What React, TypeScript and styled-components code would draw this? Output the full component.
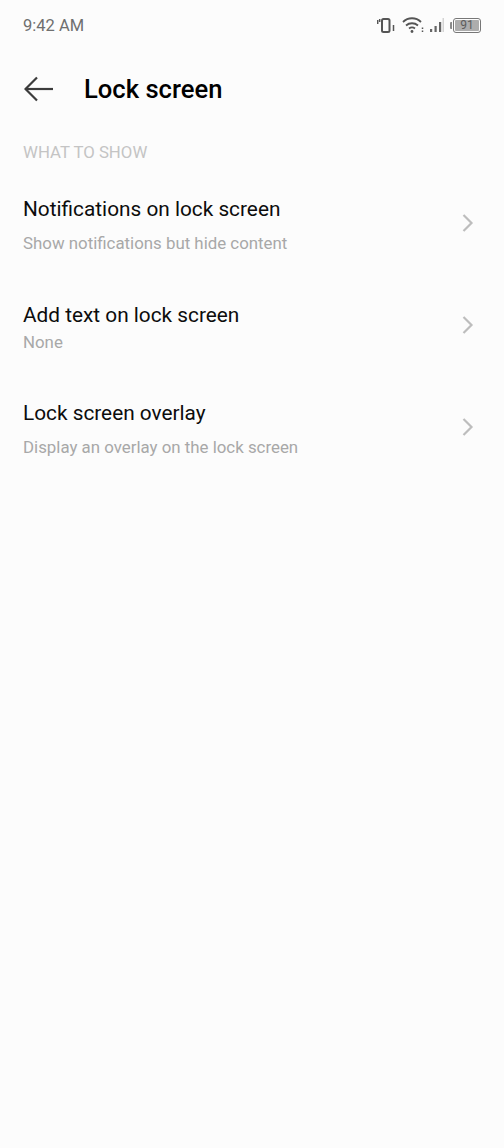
import React from 'react'
import styled, { createGlobalStyle } from 'styled-components'

const GlobalStyle = createGlobalStyle`
  html, body {
    margin: 0;
    padding: 0;
    background: #fcfcfc;
    font-family: Roboto, "Liberation Sans", sans-serif;
  }
`

const Screen = styled.div`
  width: 504px;
  height: 1148px;
  background: #fcfcfc;
  overflow: hidden;
`

const StatusBar = styled.div`
  display: flex;
  justify-content: space-between;
  align-items: center;
  height: 26px;
  padding: 12px 23px 0 23px;
  box-sizing: content-box;
`

const Time = styled.span`
  font-size: 16.5px;
  color: #6f6f6f;
`

const StatusIcons = styled.div`
  display: flex;
  align-items: center;
  gap: 6px;
`

const Battery = styled.div`
  display: flex;
  align-items: center;
`

const BatteryCap = styled.div`
  width: 2px;
  height: 7px;
  background: #8a8a8a;
  border-radius: 1px 0 0 1px;
  margin-right: 1px;
`

const BatteryBody = styled.div`
  width: 24px;
  height: 11px;
  border: 1px solid #777;
  border-radius: 3px;
  padding: 1px;
  display: flex;
`

const BatteryLevel = styled.div`
  flex: 1;
  background: #adadad;
  border-radius: 1px;
  font-size: 12px;
  line-height: 11px;
  color: #5c5c5c;
  text-align: center;
`

const Header = styled.header`
  display: flex;
  align-items: center;
  height: 50px;
  padding: 0 0 0 24px;
  margin-top: 26px;
`

const BackButton = styled.div`
  display: flex;
  width: 60px;
`

const Title = styled.h1`
  margin: 0;
  font-size: 25.6px;
  font-weight: 500;
  color: #000;
`

const SectionLabel = styled.div`
  margin-top: 28px;
  margin-bottom: 10px;
  padding-left: 23px;
  font-size: 16.8px;
  line-height: 20px;
  color: #c4c4c4;
`

const Row = styled.div`
  display: flex;
  align-items: center;
  justify-content: space-between;
  height: 102px;
  padding: 0 30px 0 23px;
`

const RowText = styled.div`
  display: flex;
  flex-direction: column;
  padding-top: 4px;
`

const RowTitle = styled.span`
  font-size: 20.8px;
  line-height: 26px;
  color: #0c0c0c;
`

const RowSub = styled.span<{ $gap: number }>`
  margin-top: ${p => p.$gap}px;
  font-size: 16.85px;
  line-height: 22px;
  color: #a8a8a8;
`

const Back = () => (
  <svg width="30" height="26" viewBox="0 0 30 26" fill="none" stroke="#3c3c3c" strokeWidth="2.2">
    <path d="M1.5 13H29" />
    <path d="M13 1.5 1.5 13 13 24.5" />
  </svg>
)

const Chevron = () => (
  <svg width="12" height="20" viewBox="0 0 12 20" fill="none" stroke="#bdbdbd" strokeWidth="2.2">
    <path d="M1.500 2l8 8-8 8" />
  </svg>
)

const Vibrate = () => (
  <svg width="19" height="18" viewBox="0 0 19 18" fill="none" stroke="#555">
    <rect x="5" y="3" width="7.500" height="13" rx="1.500" strokeWidth="2" />
    <path d="M.7 4v4M2.700 3v3M16.500 9v6" strokeWidth="1.500" />
  </svg>
)

const Wifi = () => (
  <svg width="22" height="18" viewBox="0 0 22 18" fill="none" stroke="#555" strokeWidth="1.800">
    <path d="M1 6c5-5 13-5 18 0M4 9.500c3.500-3 8.500-3 12 0M7 12.500c2-1.500 4-1.500 6 0" />
    <circle cx="10" cy="15.500" r="1.400" fill="#555" stroke="none" />
    <path d="M20.500 11.500v1.500M20.500 14.500v1.500" strokeWidth="1.500" />
  </svg>
)

const Signal = () => (
  <svg width="14" height="18" viewBox="0 0 14 18" fill="#666">
    <rect x="0" y="13" width="2.200" height="3" />
    <rect x="4.500" y="10" width="2.200" height="6" />
    <rect x="9" y="6" width="2.200" height="10" />
    <rect x="12.500" y="2" width="1.500" height="14" fill="#d4d4d4" />
  </svg>
)

const rows = [
  { title: 'Notifications on lock screen', sub: 'Show notifications but hide content', gap: 10 },
  { title: 'Add text on lock screen', sub: 'None', gap: 3 },
  { title: 'Lock screen overlay', sub: 'Display an overlay on the lock screen', gap: 10 },
]

const App: React.FC = () => {
  return (
    <Screen>
      <GlobalStyle />
      <StatusBar>
        <Time>9:42 AM</Time>
        <StatusIcons>
          <Vibrate />
          <Wifi />
          <Signal />
          <Battery>
            <BatteryCap />
            <BatteryBody>
              <BatteryLevel>91</BatteryLevel>
            </BatteryBody>
          </Battery>
        </StatusIcons>
      </StatusBar>
      <Header>
        <BackButton>
          <Back />
        </BackButton>
        <Title>Lock screen</Title>
      </Header>
      <SectionLabel>WHAT TO SHOW</SectionLabel>
      {rows.map(r => (
        <Row key={r.title}>
          <RowText>
            <RowTitle>{r.title}</RowTitle>
            <RowSub $gap={r.gap}>{r.sub}</RowSub>
          </RowText>
          <Chevron />
        </Row>
      ))}
    </Screen>
  )
}

export default App
